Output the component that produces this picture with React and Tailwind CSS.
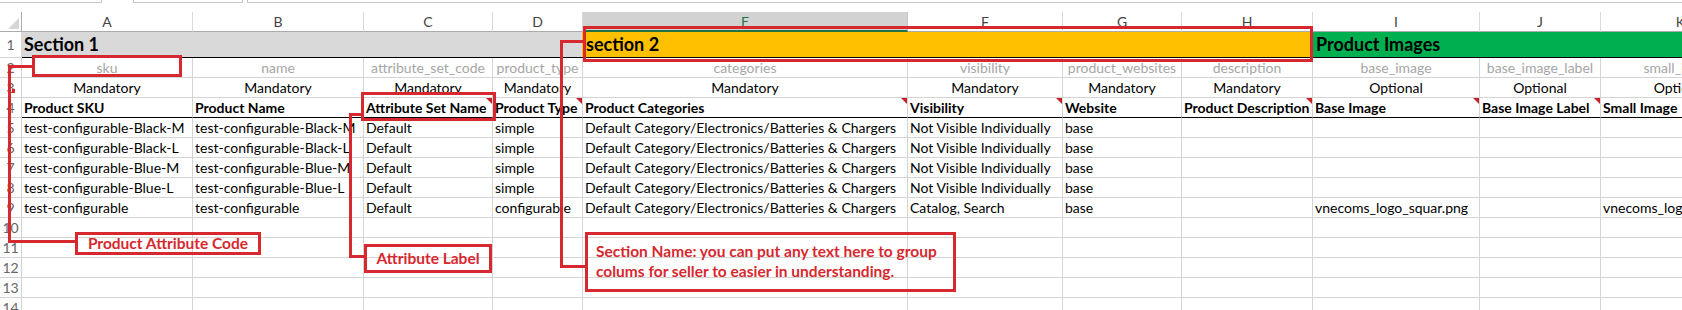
const COLS = [
  { key: 'A', w: 'w-[171px]', code: 'sku', req: 'Mandatory', label: 'Product SKU' },
  { key: 'B', w: 'w-[171px]', code: 'name', req: 'Mandatory', label: 'Product Name' },
  { key: 'C', w: 'w-[129px]', code: 'attribute_set_code', req: 'Mandatory', label: 'Attribute Set Name', note: true },
  { key: 'D', w: 'w-[90px]', code: 'product_type', req: 'Mandatory', label: 'Product Type', note: true },
  { key: 'E', w: 'w-[325px]', code: 'categories', req: 'Mandatory', label: 'Product Categories', note: true },
  { key: 'F', w: 'w-[155px]', code: 'visibility', req: 'Mandatory', label: 'Visibility', note: true },
  { key: 'G', w: 'w-[119px]', code: 'product_websites', req: 'Mandatory', label: 'Website' },
  { key: 'H', w: 'w-[131px]', code: 'description', req: 'Mandatory', label: 'Product Description', note: true },
  { key: 'I', w: 'w-[167px]', code: 'base_image', req: 'Optional', label: 'Base Image', note: true },
  { key: 'J', w: 'w-[121px]', code: 'base_image_label', req: 'Optional', label: 'Base Image Label', note: true },
  { key: 'K', w: 'w-[160px]', code: 'small_image', req: 'Optional', label: 'Small Image' },
]

const CAT = 'Default Category/Electronics/Batteries & Chargers'
const NVI = 'Not Visible Individually'

const ROWS = [
  ['test-configurable-Black-M', 'test-configurable-Black-M', 'Default', 'simple', CAT, NVI, 'base', '', '', '', ''],
  ['test-configurable-Black-L', 'test-configurable-Black-L', 'Default', 'simple', CAT, NVI, 'base', '', '', '', ''],
  ['test-configurable-Blue-M', 'test-configurable-Blue-M', 'Default', 'simple', CAT, NVI, 'base', '', '', '', ''],
  ['test-configurable-Blue-L', 'test-configurable-Blue-L', 'Default', 'simple', CAT, NVI, 'base', '', '', '', ''],
  ['test-configurable', 'test-configurable', 'Default', 'configurable', CAT, 'Catalog, Search', 'base', '', 'vnecoms_logo_squar.png', '', 'vnecoms_logo_squar.png'],
]

function RowNum({ n, className = '' }) {
  return (
    <div className={`flex w-[22px] shrink-0 items-center justify-center border-r border-b border-[#d4d4d4] text-[14px] text-[#666] ${className}`}>
      {n}
    </div>
  )
}

function Row({ n, cells, className = '', rowBorder = 'border-b-[#d4d4d4]' }) {
  return (
    <div className="flex h-[20px] shrink-0">
      <RowNum n={n} />
      {COLS.map((c, i) => (
        <div
          key={c.key}
          className={`relative flex ${c.w} shrink-0 items-center overflow-hidden whitespace-nowrap border-r border-b border-r-[#d4d4d4] ${rowBorder} ${className}`}
        >
          {cells ? cells(c, i) : null}
        </div>
      ))}
    </div>
  )
}

function Red({ className }) {
  return <div className={`absolute bg-[#d7282f] ${className}`} />
}

export default function App() {
  return (
    <div className="relative h-[310px] w-[1682px] overflow-hidden bg-white font-['Lato','Open_Sans',sans-serif] text-[14px] text-black">
      {/* formula bar bottoms */}
      <div className="flex h-[12px]">
        <div className="h-[3px] w-[102px] border-r border-b border-[#c6c6c6]" />
        <div className="ml-[31px] h-[3px] w-[110px] border-x border-b border-[#c6c6c6]" />
        <div className="ml-[4px] h-[3px] flex-1 border-l border-b border-[#c6c6c6]" />
      </div>

      {/* column letters */}
      <div className="flex h-[20px]">
        <div className="relative w-[22px] shrink-0 border-r border-b border-[#ababab]">
          <svg className="absolute right-[2px] bottom-[2px]" width="11" height="11" viewBox="0 0 11 11">
            <polygon points="11,0 11,11 0,11" fill="#d6d6d6" />
          </svg>
        </div>
        {COLS.map((c) =>
          c.key === 'E' ? (
            <div key={c.key} className={`flex ${c.w} shrink-0 items-center justify-center border-r border-b-2 border-r-[#c6c6c6] border-b-[#217346] bg-[#d2d2d2] text-[14px] text-[#217346]`}>
              {c.key}
            </div>
          ) : (
            <div key={c.key} className={`flex ${c.w} shrink-0 items-center justify-center border-r border-b border-r-[#dadada] border-b-[#ababab] text-[14px] text-[#444]`}>
              {c.key}
            </div>
          )
        )}
      </div>

      {/* row 1: sections */}
      <div className="flex h-[26px]">
        <RowNum n={1} className="border-b-[#d4d4d4]" />
        <div className="flex w-[560px] shrink-0 items-center border-b border-black bg-[#d9d9d9] pl-[2px] text-[18px] font-bold">Section 1</div>
        <div className="flex w-[730px] shrink-0 items-center border-b border-black bg-[#ffc000] pl-[4px] text-[18px] font-bold">section 2</div>
        <div className="flex flex-1 items-center border-b border-black bg-[#00b050] pl-[4px] text-[18px] font-bold">Product Images</div>
      </div>

      <Row n={2} cells={(c) => <span className="w-full text-center text-[#a6a6a6]">{c.code}</span>} />
      <Row n={3} cells={(c) => <span className="w-full text-center">{c.req}</span>} />
      <Row
        n={4}
        rowBorder="border-b-black"
        cells={(c) => (
          <>
            <span className="pl-[2px] font-bold">{c.label}</span>
            {c.note && (
              <svg className="absolute top-0 right-0" width="6" height="6" viewBox="0 0 6 6">
                <polygon points="0,0 6,0 6,6" fill="#c8202a" />
              </svg>
            )}
          </>
        )}
      />
      {ROWS.map((r, ri) => (
        <Row key={ri} n={5 + ri} cells={(c, i) => <span className="pl-[2px]">{r[i]}</span>} />
      ))}
      {[10, 11, 12, 13, 14].map((n) => (
        <Row key={n} n={n} />
      ))}

      {/* annotations */}
      <div className="absolute top-[55px] left-[32px] h-[22px] w-[150px] border-[3px] border-[#d7282f]" />
      <Red className="top-[65px] left-[8px] h-[3px] w-[25px]" />
      <Red className="top-[65px] left-[8px] h-[178px] w-[3px]" />
      <Red className="top-[240px] left-[8px] h-[3px] w-[68px]" />
      <Red className="top-[89px] left-[12px] h-[4px] w-[3px]" />
      <div className="absolute top-[232px] left-[75px] flex h-[23px] w-[186px] items-center justify-center border-[3px] border-[#d7282f] text-[15.5px] font-bold text-[#d7282f]">
        Product Attribute Code
      </div>

      <div className="absolute top-[92px] left-[361px] h-[29px] w-[135px] border-[3px] border-[#d7282f]" />
      <Red className="top-[113px] left-[349px] h-[3px] w-[14px]" />
      <Red className="top-[113px] left-[349px] h-[145px] w-[3px]" />
      <Red className="top-[255px] left-[349px] h-[3px] w-[17px]" />
      <div className="absolute top-[244px] left-[364px] flex h-[29px] w-[128px] items-center justify-center border-[3px] border-[#d7282f] text-[15.5px] font-bold text-[#d7282f]">
        Attribute Label
      </div>

      <div className="absolute top-[26px] left-[583px] h-[36px] w-[730px] border-[3px] border-[#d7282f]" />
      <Red className="top-[40px] left-[560px] h-[3px] w-[24px]" />
      <Red className="top-[40px] left-[560px] h-[228px] w-[3px]" />
      <Red className="top-[265px] left-[560px] h-[3px] w-[26px]" />
      <div className="absolute top-[232px] left-[585px] h-[60px] w-[371px] border-[3px] border-[#d7282f] pt-[6px] pl-[8px] text-[15.5px] leading-[20px] font-bold text-[#d7282f]">
        <p>Section Name: you can put any text here to group</p>
        <p>colums for seller to easier in understanding.</p>
      </div>
    </div>
  )
}
